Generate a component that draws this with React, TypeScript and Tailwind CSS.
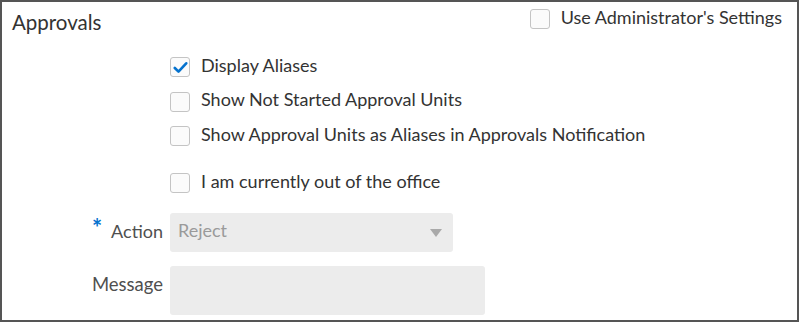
import React from "react";

const font = { fontFamily: "Lato, 'Liberation Sans', sans-serif" };

function Box({ checked }: { checked?: boolean }) {
  return (
    <span className="flex h-[20px] w-[20px] shrink-0 items-center justify-center rounded-[3px] border border-[#c4c4c4] bg-[#fbfbfb]">
      {checked && (
        <svg width="15" height="13" viewBox="0 0 15 13">
          <path d="M1.8 7 L5.5 10.7 L13.2 2.3" fill="none" stroke="#0572ce" strokeWidth="2.6" strokeLinecap="round" strokeLinejoin="round" />
        </svg>
      )}
    </span>
  );
}

function Check({ label, checked }: { label: string; checked?: boolean }) {
  return (
    <div className="flex h-[20px] items-center gap-[11px]">
      <Box checked={checked} />
      <span className="-mt-[5px] whitespace-nowrap text-[18px] leading-[20px] text-[#333]">{label}</span>
    </div>
  );
}

export default function App() {
  return (
    <div className="h-[322px] w-[799px] overflow-hidden border-2 border-[#555] bg-white" style={font}>
      <div className="flex items-start justify-between pl-[10px] pr-[15px] pt-[5px]">
        <span className="text-[20.5px] leading-[30px] text-[#333]">Approvals</span>
        <div className="mt-[2px]">
          <Check label="Use Administrator's Settings" />
        </div>
      </div>
      <div className="ml-[168px] mt-[20px] flex flex-col">
        <Check label="Display Aliases" checked />
        <div className="mt-[14.5px]">
          <Check label="Show Not Started Approval Units" />
        </div>
        <div className="mt-[14.5px]">
          <Check label="Show Approval Units as Aliases in Approvals Notification" />
        </div>
        <div className="mt-[27px]">
          <Check label="I am currently out of the office" />
        </div>
      </div>
      <div className="mt-[20px] grid grid-cols-[168px_auto] gap-y-[14px]">
        <div className="flex items-center justify-end pr-[7px]">
          <span className="mr-[9px] -mt-[10px] text-[24px] leading-[20px] font-bold text-[#0572ce]">*</span>
          <span className="-mt-[4px] text-[18px] leading-[22px] text-[#4f4f4f]">Action</span>
        </div>
        <div className="flex h-[39px] w-[283px] items-center justify-between rounded-[3px] bg-[#ececec] pl-[8px] pr-[11px]">
          <span className="-mt-[5px] text-[18px] leading-[22px] text-[#9a9a9a]">Reject</span>
          <svg width="12" height="8" viewBox="0 0 12 8">
            <path d="M0 0 H12 L6 8 Z" fill="#a9a9a9" />
          </svg>
        </div>
        <div className="flex justify-end pr-[7px] pt-[7px]">
          <span className="text-[18.5px] leading-[22px] text-[#4f4f4f]">Message</span>
        </div>
        <div className="h-[49px] w-[315px] rounded-[3px] bg-[#ececec]" />
      </div>
    </div>
  );
}
